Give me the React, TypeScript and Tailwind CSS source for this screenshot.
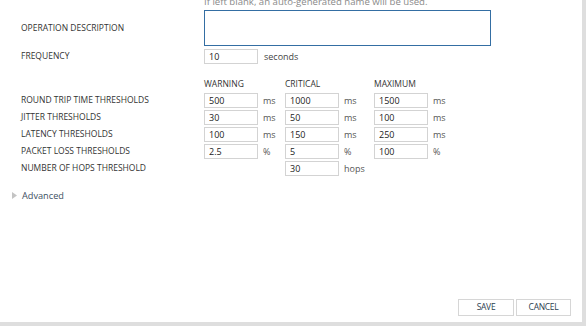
import React from 'react';

const rows = [
  { label: 'ROUND TRIP TIME THRESHOLDS', vals: ['500', '1000', '1500'], unit: 'ms' },
  { label: 'JITTER THRESHOLDS', vals: ['30', '50', '100'], unit: 'ms' },
  { label: 'LATENCY THRESHOLDS', vals: ['100', '150', '250'], unit: 'ms' },
  { label: 'PACKET LOSS THRESHOLDS', vals: ['2.5', '5', '100'], unit: '%' },
];

function Field({ value }: { value: string }) {
  return (
    <input
      readOnly
      value={value}
      className="h-[15px] w-[54px] border border-[#d3d3d3] bg-white px-[4px] text-[9px] leading-[13px] text-[#222] outline-none"
    />
  );
}

function Label({ children }: { children: React.ReactNode }) {
  return <div className="w-[183px] text-[8.5px] text-[#333]">{children}</div>;
}

export default function App() {
  return (
    <div className="h-[326px] w-[586px] overflow-hidden bg-[#dedede]" style={{ fontFamily: '"Open Sans", sans-serif' }}>
      <div className="flex h-[322px] w-[582px] flex-col bg-white pl-[21px]">
        <div className="-mt-[5px] ml-[183px] text-[9.6px] leading-[13px] text-[#8a8a8a]">
          If left blank, an auto-generated name will be used.
        </div>

        <div className="mt-[2px] flex items-center">
          <Label>OPERATION DESCRIPTION</Label>
          <div className="h-[36px] w-[287px] border border-[#346ea3]" />
        </div>

        <div className="mt-[3px] flex items-center">
          <Label>FREQUENCY</Label>
          <Field value="10" />
          <span className="ml-[6px] text-[9px] text-[#444]">seconds</span>
        </div>

        <div className="mt-[15px] flex text-[8.5px] leading-[10px] text-[#333]">
          <div className="w-[183px]" />
          <div className="w-[81px]">WARNING</div>
          <div className="w-[89px]">CRITICAL</div>
          <div>MAXIMUM</div>
        </div>

        <div className="mt-[4px] flex flex-col gap-[2px]">
          {rows.map((r) => (
            <div key={r.label} className="flex h-[15px] items-center">
              <Label>{r.label}</Label>
              {r.vals.map((v, i) => (
                <div key={i} className={`flex items-center ${i === 1 ? 'w-[89px]' : 'w-[81px]'}`}>
                  <Field value={v} />
                  <span className="ml-[5px] text-[9px] text-[#555]">{r.unit}</span>
                </div>
              ))}
            </div>
          ))}
          <div className="flex h-[15px] items-center">
            <Label>NUMBER OF HOPS THRESHOLD</Label>
            <div className="w-[81px]" />
            <Field value="30" />
            <span className="ml-[5px] text-[9px] text-[#555]">hops</span>
          </div>
        </div>

        <div className="-ml-[9px] mt-[13px] flex items-center gap-[5px]">
          <svg width="5" height="7" viewBox="0 0 5 7">
            <path d="M0 0 L5 3.5 L0 7 Z" fill="#c4c4c4" />
          </svg>
          <span className="text-[9.2px] text-[#3c4f63]">Advanced</span>
        </div>

        <div className="mt-auto mb-[6px] flex justify-end gap-[2px] pr-[11px]">
          <button className="h-[17px] w-[56px] border border-[#d6d6d6] bg-white text-[8.5px] tracking-[-0.3px] text-[#2c3e50]">
            SAVE
          </button>
          <button className="h-[17px] w-[55px] border border-[#d6d6d6] bg-white text-[8.5px] tracking-[-0.3px] text-[#2c3e50]">
            CANCEL
          </button>
        </div>
      </div>
    </div>
  );
}
